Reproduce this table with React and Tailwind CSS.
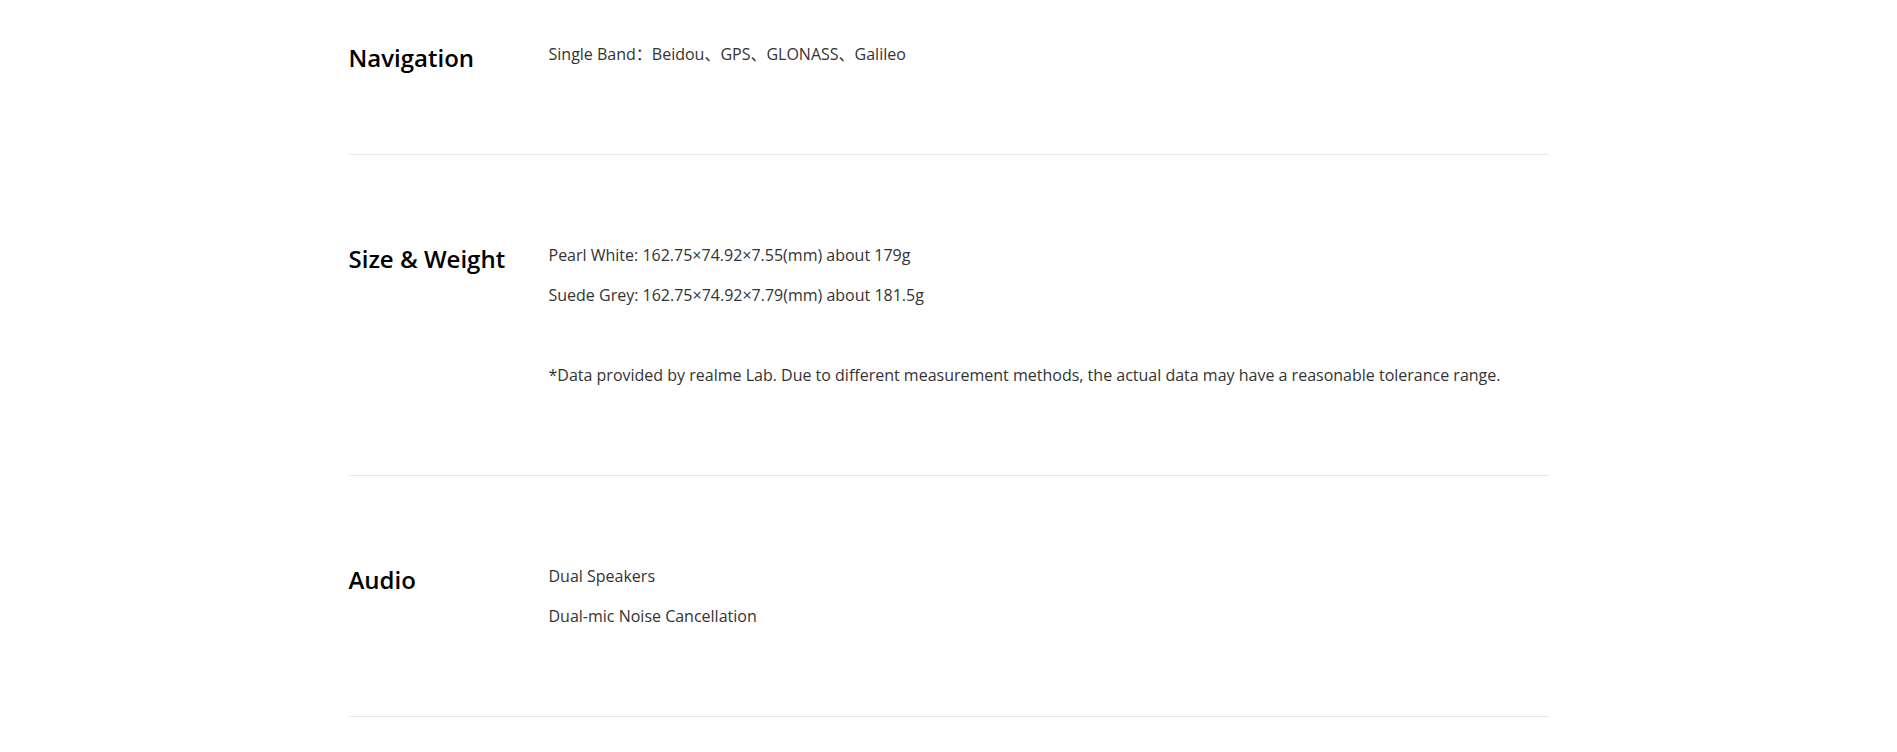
import React from 'react';

const specs = [
  {
    title: 'Navigation',
    lines: ['Single Band：Beidou、GPS、GLONASS、Galileo'],
  },
  {
    title: 'Size & Weight',
    lines: [
      'Pearl White: 162.75×74.92×7.55(mm) about 179g',
      'Suede Grey: 162.75×74.92×7.79(mm) about 181.5g',
      '',
      '*Data provided by realme Lab. Due to different measurement methods, the actual data may have a reasonable tolerance range.',
    ],
  },
  {
    title: 'Audio',
    lines: ['Dual Speakers', 'Dual-mic Noise Cancellation'],
  },
];

const SpecRow = ({ title, lines, first }) => (
  <div
    className={`flex items-start border-b border-[#e9e9e9] pb-[88px] ${
      first ? 'pt-[42px]' : 'pt-[88px]'
    }`}
  >
    {/* heading box kept at body line height so it doesn't push the row taller */}
    <h3 className="h-6 w-[200px] shrink-0 text-[24px] leading-[32px] font-semibold text-black">
      {title}
    </h3>
    <div className="flex flex-col gap-4 text-[16px] leading-6 text-[#333]">
      {lines.map((line, i) => (
        <p key={i} className="h-6">
          {line}
        </p>
      ))}
    </div>
  </div>
);

export default function App() {
  return (
    <div
      className="min-h-screen bg-white"
      style={{ fontFamily: '"Open Sans", "Noto Sans CJK SC", sans-serif' }}
    >
      <div className="mx-auto w-[1200px]">
        {specs.map((s, i) => (
          <SpecRow key={s.title} title={s.title} lines={s.lines} first={i === 0} />
        ))}
      </div>
    </div>
  );
}
